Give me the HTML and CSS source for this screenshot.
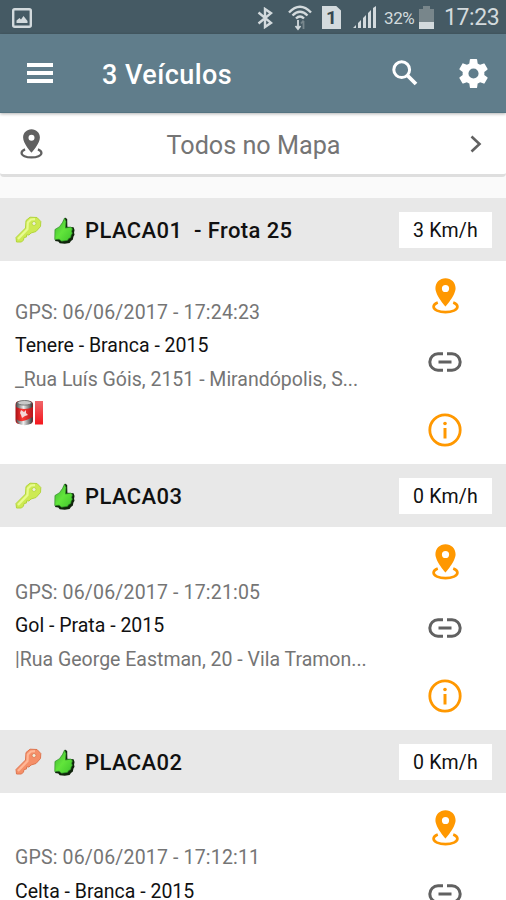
FILE: index.html
```html
<!DOCTYPE html>
<html lang="pt-BR">
<head>
    <meta charset="UTF-8">
    <meta name="viewport" content="width=device-width, initial-scale=1.0">
    <title>3 Veículos</title>
    <link rel="stylesheet" href="styles.css">
</head>
<body>
    <!-- Shared icons -->
    <svg class="sprite" width="0" height="0">
        <defs>
            <linearGradient id="thumbFill" x1="0" y1="0" x2="1" y2="1">
                <stop offset="0" stop-color="#3fae35"/>
                <stop offset=".5" stop-color="#62e53b"/>
                <stop offset="1" stop-color="#3fc52c"/>
            </linearGradient>
            <linearGradient id="canFill">
                <stop offset="0" stop-color="#a80f14"/>
                <stop offset=".4" stop-color="#ff3b36"/>
                <stop offset="1" stop-color="#b3161b"/>
            </linearGradient>
            <linearGradient id="metalFill">
                <stop offset="0" stop-color="#444"/>
                <stop offset=".45" stop-color="#eee"/>
                <stop offset="1" stop-color="#333"/>
            </linearGradient>
            <linearGradient id="barFill" x2="0" y2="1">
                <stop offset="0" stop-color="#f0666a"/>
                <stop offset="1" stop-color="#f5161c"/>
            </linearGradient>
        </defs>
        <symbol id="pin" viewBox="0 0 26 35">
            <path fill="currentColor" fill-rule="evenodd" d="M13 .3C7.400.3 3.200 4.500 3.200 10c0 7 9.800 17.800 9.800 17.800S22.800 17 22.800 10C22.800 4.500 18.600.3 13 .3zM13 6.700a3.500 3.500 0 1 1 0 7 3.500 3.500 0 0 1 0-7z"/>
            <path fill="none" stroke="currentColor" stroke-width="2.600" d="M5.500 23.800C2.800 24.800 1.400 26.200 1.400 28c0 3 5.200 5.200 11.600 5.200s11.600-2.200 11.600-5.200c0-1.800-1.400-3.200-4.100-4.200"/>
        </symbol>
        <symbol id="link" viewBox="0 0 34 20">
            <path fill="none" stroke="currentColor" stroke-width="3" d="M15 1.800H10a8.200 8.200 0 0 0 0 16.400h5M19 1.800h5a8.200 8.200 0 0 1 0 16.400h-5M10.500 10h13"/>
        </symbol>
        <symbol id="info" viewBox="0 0 34 34">
            <circle cx="17" cy="17" r="15.200" fill="none" stroke="currentColor" stroke-width="2.800"/>
            <circle cx="17" cy="10.500" r="1.800" fill="currentColor"/>
            <path fill="none" stroke="currentColor" stroke-width="3" d="M17 15v10.500"/>
        </symbol>
        <symbol id="key" viewBox="0 0 27 27">
            <path fill="currentColor" stroke="var(--edge)" stroke-width="1" stroke-linejoin="round" d="M11 4.500 15 1.200 22 1.500 25.800 5.500 25.500 10.500 21 15.500 16 17 14 19 11.500 18.800 11.500 21 9 21.500 8.500 24 6.500 26 1.500 26 1 21.500 10.500 12z"/>
            <path fill="none" stroke="var(--shine)" stroke-width="2.200" d="M3 23 12.500 13 12.800 6.500 16 3.500 20 3.200"/>
            <circle cx="19" cy="7.500" r="2" fill="#eef0dc" stroke="var(--edge)" stroke-width=".8"/>
        </symbol>
        <symbol id="thumb" viewBox="0 0 22 28">
            <path fill="#10240c" d="M11.500 1l2.300 1.500.2 8 6.500.5 1 3-.5 3 .5 2-1.200 2-.5 3-2 1.500-1.500 2-5 .8-5.300-.3L4.500 26 1 25.500z"/>
            <path fill="url(#thumbFill)" stroke="#2c8a25" stroke-width=".7" d="M11 1.500 9 6 5.800 10.500 1 13.500.8 24l4.500-.3 2.700 2 6-.8 1.500-2 2-1 .5-2.500 1.200-2-.7-2 .8-2.500-1.500-2L12 12l.6-7z"/>
        </symbol>
        <symbol id="search" viewBox="0 0 26 26">
            <circle cx="9.700" cy="9.700" r="7.900" fill="none" stroke="currentColor" stroke-width="3"/>
            <path fill="none" stroke="currentColor" stroke-width="3.800" d="M15.500 15.500 24 24"/>
        </symbol>
        <symbol id="gear" viewBox="2 2 20 20">
            <path fill="currentColor" d="M19.430 12.980c.04-.32.07-.64.07-.98s-.03-.66-.07-.98l2.110-1.650c.19-.15.24-.42.12-.64l-2-3.460c-.12-.22-.39-.3-.61-.22l-2.490 1c-.52-.4-1.080-.73-1.690-.98l-.38-2.650A.488.488 0 0 0 14 2h-4c-.25 0-.46.18-.49.42l-.38 2.650c-.61.25-1.170.59-1.690.98l-2.490-1c-.23-.09-.49 0-.61.22l-2 3.460c-.13.22-.07.49.12.64l2.110 1.650c-.04.32-.07.65-.07.98s.03.66.07.98l-2.110 1.650c-.19.15-.24.42-.12.64l2 3.460c.12.22.39.3.61.22l2.490-1c.52.4 1.080.73 1.690.98l.38 2.650c.03.24.24.42.49.42h4c.25 0 .46-.18.49-.42l.38-2.650c.61-.25 1.170-.59 1.690-.98l2.490 1c.23.09.49 0 .61-.22l2-3.460c.12-.22.07-.49-.12-.64l-2.110-1.650zM12 15.500a3.500 3.500 0 1 1 0-7 3.500 3.500 0 0 1 0 7z"/>
        </symbol>
    </svg>

    <!-- Phone status bar -->
    <div class="status-bar">
        <svg class="picture" viewBox="0 0 20 20"><rect x="1.200" y="1.200" width="17.600" height="17.600" rx="1.500" fill="none" stroke="currentColor" stroke-width="2.400"/><path fill="currentColor" d="M4.500 15v-2.500l3-2.500 1.500 1.500L11.500 8l4 5v2z"/></svg>
        <svg class="bluetooth" viewBox="0 0 16 22"><path fill="none" stroke="currentColor" stroke-width="2.400" d="M1.500 5.500 14 15.800 8 20V2l6 4.200L1.500 16.500"/></svg>
        <svg class="wifi" viewBox="0 0 24 26"><path fill="none" stroke="currentColor" stroke-width="2.400" d="M1 7.500Q12-4 23 7.500M4.500 10.500Q12 3 19.500 10.500M8 13.500Q12 9.500 16 13.500"/><path fill="none" stroke="currentColor" stroke-width="1.800" d="M10 15v8.500M7.500 21 10 24l2.500-3"/><path fill="none" stroke="#78878d" stroke-width="1.800" d="M15.500 24v-8M13 18.500l2.500-3"/></svg>
        <div class="sim">1</div>
        <svg class="signal" viewBox="0 0 23 23"><path fill="currentColor" d="M0 22l3-3v3zM5 17l3-3v8H5zM10 12l3-3v13h-3zM15 7l3-3v18h-3zM20 2l3-2v22h-3z"/></svg>
        <span class="percent">32%</span>
        <svg class="battery" viewBox="0 0 15 23"><path fill="#78868b" d="M4 0h7v3h4v13H0V3h4z"/><path fill="currentColor" d="M0 16h15v7H0z"/></svg>
        <span class="clock">17:23</span>
    </div>

    <!-- App bar -->
    <header class="app-bar">
        <div class="menu"><span></span><span></span><span></span></div>
        <h1>3 Veículos</h1>
        <svg class="search"><use href="#search"/></svg>
        <svg class="gear"><use href="#gear"/></svg>
    </header>

    <div class="map-link">
        <svg class="map-pin"><use href="#pin"/></svg>
        <span>Todos no Mapa</span>
        <svg class="chevron" viewBox="0 0 12 18"><path fill="none" stroke="currentColor" stroke-width="2.600" d="M1.500 1.500 9.500 9l-8 7.500"/></svg>
    </div>

    <!-- Vehicles -->
    <main>
        <section class="vehicle">
            <div class="vehicle-header">
                <svg class="key on"><use href="#key"/></svg>
                <svg class="thumb"><use href="#thumb"/></svg>
                <h2>PLACA01&nbsp; - Frota 25</h2>
                <div class="speed">3 Km/h</div>
            </div>
            <div class="vehicle-body">
                <div class="details">
                    <p class="gps">GPS: 06/06/2017 - 17:24:23</p>
                    <p class="model">Tenere - Branca - 2015</p>
                    <p class="address">_Rua Luís Góis, 2151 - Mirandópolis, S...</p>
                    <div class="sensors">
                        <svg class="can" viewBox="0 0 29 27">
                            <rect x=".5" y="2" width="17.500" height="23" rx="4" fill="url(#canFill)"/>
                            <path fill="url(#metalFill)" d="M1 5c0-5 16.500-5 16.500 0v3c-4 2.500-12 2.500-16.500 0zM1.500 20c4 4 9 2 16-2v4c0 5-14 6-16 0z"/>
                            <ellipse cx="9.500" cy="3.800" rx="7" ry="2.300" fill="#c9c9c9" stroke="#555" stroke-width=".7"/>
                            <path fill="#f5d8d8" d="M6 11l3 2 2-2v3l2 2-3 1-3 2-1-3-1-2z"/>
                            <rect x="20" y="2" width="8" height="23.500" fill="url(#barFill)"/>
                        </svg>
                    </div>
                </div>
                <div class="actions">
                    <svg class="pin"><use href="#pin"/></svg>
                    <svg class="link"><use href="#link"/></svg>
                    <svg class="info"><use href="#info"/></svg>
                </div>
            </div>
        </section>

        <section class="vehicle">
            <div class="vehicle-header">
                <svg class="key on"><use href="#key"/></svg>
                <svg class="thumb"><use href="#thumb"/></svg>
                <h2>PLACA03</h2>
                <div class="speed">0 Km/h</div>
            </div>
            <div class="vehicle-body">
                <div class="details">
                    <p class="gps">GPS: 06/06/2017 - 17:21:05</p>
                    <p class="model">Gol - Prata - 2015</p>
                    <p class="address">|Rua George Eastman, 20 - Vila Tramon...</p>
                </div>
                <div class="actions">
                    <svg class="pin"><use href="#pin"/></svg>
                    <svg class="link"><use href="#link"/></svg>
                    <svg class="info"><use href="#info"/></svg>
                </div>
            </div>
        </section>

        <section class="vehicle">
            <div class="vehicle-header">
                <svg class="key off"><use href="#key"/></svg>
                <svg class="thumb"><use href="#thumb"/></svg>
                <h2>PLACA02</h2>
                <div class="speed">0 Km/h</div>
            </div>
            <div class="vehicle-body">
                <div class="details">
                    <p class="gps">GPS: 06/06/2017 - 17:12:11</p>
                    <p class="model">Celta - Branca - 2015</p>
                </div>
                <div class="actions">
                    <svg class="pin"><use href="#pin"/></svg>
                    <svg class="link"><use href="#link"/></svg>
                </div>
            </div>
        </section>
    </main>
</body>
</html>
```
FILE: styles.css
```css
/* General Styles */
* {
    box-sizing: border-box;
}
body {
    font-family: Roboto, sans-serif;
    background: #fafafa;
    margin: 0;
    height: 900px;
    overflow: hidden;
    color: #111;
}
h1, h2, p {
    margin: 0;
    white-space: nowrap;
}
svg {
    display: block;
    flex: none;
}
.sprite {
    position: absolute;
}

/* Status bar */
.status-bar {
    display: flex;
    align-items: center;
    height: 34px;
    padding: 1px 7px 0 12px;
    background: #455a64;
    color: #d3dadd;
}
.picture {
    width: 20px;
    height: 20px;
    margin-right: auto;
}
.bluetooth {
    width: 16px;
    height: 22px;
    margin-right: 15px;
}
.wifi {
    width: 24px;
    height: 26px;
    margin-right: 10px;
}
.sim {
    width: 19px;
    height: 23px;
    margin-right: 12px;
    background: #d3dadd;
    clip-path: polygon(0 0, 75% 0, 100% 20%, 100% 100%, 0 100%);
    color: #37474f;
    font-size: 19px;
    font-weight: 700;
    line-height: 23px;
    text-align: center;
}
.signal {
    width: 23px;
    height: 23px;
    margin-right: 8px;
}
.percent {
    width: 31px;
    margin-right: 4px;
    font-size: 17px;
    letter-spacing: -0.4px;
}
.battery {
    width: 15px;
    height: 23px;
    margin-right: 10px;
}
.clock {
    width: 55px;
    font-size: 23px;
    letter-spacing: -0.4px;
    line-height: 32px;
    white-space: nowrap;
}

/* App bar */
.app-bar {
    position: relative;
    display: flex;
    align-items: center;
    height: 79px;
    padding: 0 18px 0 27px;
    background: #607d8b;
    border-bottom: 1px solid #557482;
    box-shadow: 0 1px 3px rgba(0, 0, 0, 0.3);
    color: #fff;
}
.menu {
    display: grid;
    gap: 4px;
    width: 26px;
    margin-right: 49px;
}
.menu span {
    height: 4px;
    background: #fff;
}
.app-bar h1 {
    flex: 1;
    padding-top: 4px;
    font-size: 27px;
    font-weight: 500;
    letter-spacing: 0.45px;
}
.search {
    width: 26px;
    height: 26px;
    margin-right: 41px;
}
.gear {
    width: 29px;
    height: 29px;
}

/* Map link */
.map-link {
    display: flex;
    align-items: center;
    height: 64px;
    padding: 0 24px 0 20px;
    background: #fff;
    border-bottom: 3px solid #dedede;
    border-radius: 0 0 4px 4px;
    color: #616161;
}
.map-link span {
    flex: 1;
    padding: 4px 6px 0 0;
    font-size: 25.2px;
    text-align: center;
    color: #757575;
}
.map-pin {
    width: 23px;
    height: 30px;
}
.chevron {
    width: 12px;
    height: 18px;
}

/* Vehicle list */
main {
    padding-top: 21px;
}
.vehicle {
    height: 266px;
    background: #fff;
}
.vehicle-header {
    display: flex;
    align-items: center;
    height: 63px;
    padding: 0 14px 0 15px;
    background: #e8e8e8;
}
.key {
    width: 27px;
    height: 27px;
    margin-right: 12px;
}
.key.on {
    --edge: #b3d53c;
    --shine: #e8fb90;
    color: #cdea52;
}
.key.off {
    --edge: #de7650;
    --shine: #ffb796;
    color: #f58f68;
}
.thumb {
    width: 21px;
    height: 28px;
    margin-right: 10px;
}
.vehicle-header h2 {
    flex: 1;
    padding-top: 1px;
    font-size: 22px;
    font-weight: 500;
    letter-spacing: 0.4px;
}
.speed {
    width: 93px;
    height: 36px;
    background: #fff;
    font-size: 19.5px;
    letter-spacing: 0.2px;
    line-height: 37px;
    text-align: center;
}
.vehicle-body {
    display: flex;
    height: 203px;
}
.details {
    flex: 1;
    display: flex;
    flex-direction: column;
    justify-content: center;
    padding: 0 0 5px 15px;
    font-size: 19.5px;
    line-height: 33.3px;
}
.gps, .address {
    color: #757575;
}
.gps {
    letter-spacing: 0.17px;
}
.sensors {
    height: 28px;
}
.can {
    width: 29px;
    height: 27px;
    margin-top: 3px;
}
.actions {
    display: flex;
    flex-direction: column;
    align-items: center;
    width: 122px;
    padding-top: 17px;
    color: #ff9800;
}
.pin {
    width: 27px;
    height: 36px;
}
.link {
    width: 34px;
    height: 20px;
    margin: 38px 0 41px;
    color: #616161;
}
.info {
    width: 34px;
    height: 34px;
}

/* The last vehicle runs past the bottom edge */
.vehicle:last-child {
    height: 170px;
    overflow: hidden;
}
.vehicle:last-child .details {
    justify-content: flex-start;
    gap: 12px;
    padding-top: 54px;
    line-height: 22px;
}
```
